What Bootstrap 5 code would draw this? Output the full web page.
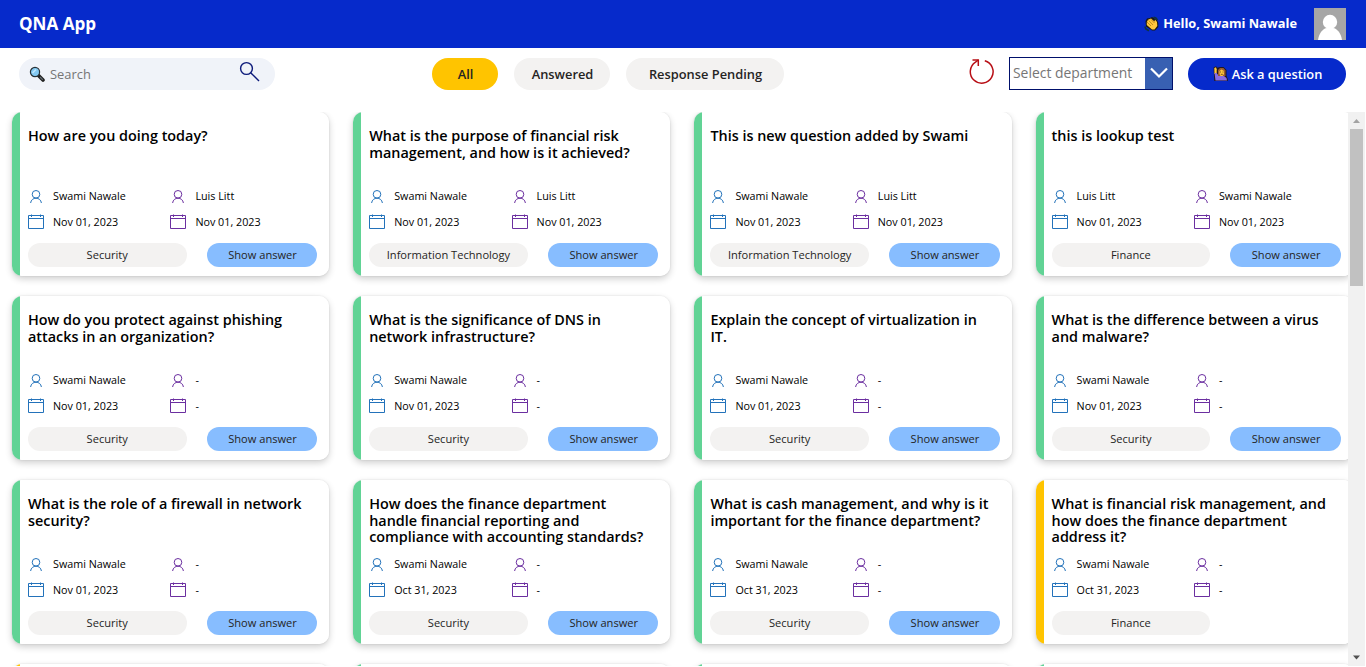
<!DOCTYPE html>
<html lang="en">
<head>
<meta charset="utf-8">
<meta name="viewport" content="width=device-width, initial-scale=1">
<title>QNA App</title>
<link href="https://cdn.jsdelivr.net/npm/bootstrap@5.3.0/dist/css/bootstrap.min.css" rel="stylesheet">
<style>
  body { font-family: "Open Sans", sans-serif; color: #000; background: #fff; height: 667px; overflow: hidden; }
  .topbar { height: 48px; background: #062acb; padding: 0 20px 0 19px; }
  .brand { font-size: 17.1px; font-weight: 700; line-height: 24px; }
  .hello { font-size: 12.8px; font-weight: 700; }
  .toolbar { height: 64px; padding: 9px 20px 0 19px; }
  .search-pill { width: 256px; height: 32px; margin-top: 1px; background: #f0f3f9; font-size: 12.9px; color: #757575; padding: 0 15px 0 10px; }
  .filters { margin: 1px 0 0 157px; }
  .pill { height: 32px; border: 0; border-radius: 16px; background: #f3f2f1; color: #252423; font-size: 12.85px; font-weight: 600; padding: 0 0 0 1px; line-height: 32px; text-align: center; }
  .pill.active { background: #ffc400; }
  .dept { width: 164px; height: 33px; border: 1px solid #00106b; font-size: 13.9px; color: #767676; margin-left: 14px; }
  .dept-caret { width: 27px; background: #3860b2; padding-bottom: 1px; }
  .ask { width: 158px; height: 32px; margin: 1px 0 0 15px; background: #062acb; color: #fff; font-size: 12.85px; font-weight: 600; padding-left: 1px; }
  .gallery { height: 554px; }
  .viewport { width: 1348px; padding-left: 12px; overflow: hidden; }
  .cards { display: grid; grid-template-columns: repeat(4, 317.3px); column-gap: 23.9px; row-gap: 20px; }
  .qcard { height: 164px; border-radius: 10px; background: linear-gradient(to right, #61d395 8px, #fff 8px); padding: 16.1px 12px 0 16px; box-shadow: 0 3px 7px rgba(0,0,0,.19), 0 0 2px rgba(0,0,0,.12); }
  .qcard.pending { background: linear-gradient(to right, #ffc400 8px, #fff 8px); }
  .qtitle { font-size: 14.4px; font-weight: 600; line-height: 16.6px; height: 54.9px; margin: 0; width: 290px; }
  .facts { display: grid; grid-template-columns: 142.4px 140px; grid-auto-rows: 26px; font-size: 10.75px; align-items: center; }
  .facts > div { display: flex; align-items: center; }
  .facts span { padding-left: 9px; white-space: nowrap; }
  .facts svg { width: 16px; height: 16px; flex: none; fill: none; stroke: #2372ba; }
  .facts .to svg { stroke: #6b2fa0; }
  .acts { margin-top: 8px; font-size: 11.1px; font-weight: 500; line-height: 24px; color: #252423; text-align: center; }
  .tag { width: 158.5px; background: #f3f2f1; }
  .show { width: 110.5px; background: #87bdff; margin-left: 20.3px; padding-left: 1px; }
  .sbar { width: 17px; background: #f1f1f1; }
  .thumb { width: 13px; height: 157px; background: #c1c1c1; }
</style>
</head>
<body>
<svg class="d-none">
  <symbol id="person" viewBox="0 0 16 16"><circle cx="8" cy="6.3" r="3.8"/><path d="M2.6 15C3 11.800 5.400 10.200 8 10.200S13 11.800 13.400 15"/></symbol>
  <symbol id="cal" viewBox="0 0 16 16"><path d="M.5 1.500h15v13H.5zM.5 4.500h15M3.500 .5v2.500M12.500 .5v2.500"/></symbol>
</svg>

<header class="topbar d-flex align-items-center text-white">
  <div class="brand">QNA App</div>
  <div class="hello ms-auto d-flex align-items-center">
    <svg width="15" height="16" viewBox="0 0 15 16" style="margin-right:4px"><path d="M1.500 5L3 2.500l3-.5 2-1 5 3 1.300 3v4L11 14.500H8L2 10.500z" fill="#1d1a12"/><path d="M2.800 6L4 3.800l3-1.300 3.500 3 .5-2 2 2.500.3 4-2.800 3.500H8L2.800 9z" fill="#ffc83d"/><path d="M3 6l4 4M4.700 4.500L9 9M7 3.500L10.500 7" stroke="#b57a16" stroke-width=".8"/><path d="M9.500 1.300l2.300.7 1.700 2M.9 10.500l1 2.500 3 1.700" fill="none" stroke="#10343f" stroke-width="1.700"/></svg>
    <span>Hello, Swami Nawale</span>
  </div>
  <svg width="32" height="32" viewBox="0 0 32 32" style="margin-left:17px"><path fill="#a6a6a6" d="M0 0h32v32H0z"/><circle cx="16" cy="14" r="7.200" fill="#fff"/><path d="M4 32c1-7 5-11.500 9-12h6c4 .5 8 5 9 12z" fill="#fff"/></svg>
</header>

<div class="toolbar d-flex align-items-start">
  <div class="search-pill rounded-pill d-flex align-items-center">
    <svg width="17" height="16" viewBox="0 0 17 16"><path d="M9 9l5 5" stroke="#222" stroke-width="3.600" stroke-linecap="round"/><path d="M11 11l2.800 2.800" stroke="#667078" stroke-width="1.200"/><circle cx="6" cy="6" r="4.600" fill="#83c9f2" stroke="#273238" stroke-width="1.200"/><path d="M3.500 7L7 3.500" stroke="#c1e8ff" stroke-width="1.500"/></svg>
    <span style="padding:1px 0 0 4px">Search</span>
    <svg class="ms-auto mb-1" width="21" height="22" viewBox="0 0 21 22" fill="none" stroke="#0c1a7a" stroke-width="1.400"><circle cx="7.500" cy="7.500" r="5.900"/><path d="M11.700 11.700l8.300 8.300"/></svg>
  </div>
  <div class="filters d-flex">
    <button class="pill active" style="width:66px">All</button>
    <button class="pill" style="width:96px;margin-left:16px">Answered</button>
    <button class="pill" style="width:158px;margin-left:16px">Response Pending</button>
  </div>
  <svg class="ms-auto" width="26" height="28" viewBox="0 0 26 28" fill="none" stroke="#b80f16" stroke-width="1.500"><path d="M15.800 3.800A11.400 11.400 0 1 1 6.500 5.200L9.300 3"/><path d="M3.500 3h5.800v6"/></svg>
  <div class="dept d-flex"><span class="flex-grow-1" style="padding-left:3px;line-height:30px">Select department</span>
    <div class="dept-caret d-flex align-items-center justify-content-center"><svg width="18" height="12" viewBox="0 0 18 12"><path d="M1 1.500l8 8 8-8" fill="none" stroke="#fff" stroke-width="2.200"/></svg></div>
  </div>
  <div class="ask rounded-pill d-flex align-items-center justify-content-center">
    <svg width="15" height="16" viewBox="0 0 15 16" style="margin-right:4px"><path d="M.5 1.500L3 .3l1.500 1.500L7 1h3.500l3 3v6l1.300 3v2H1.300z" fill="#21191f"/><path d="M1.300 2l1.700-.7.7 2V8H1.500z" fill="#ffc83d"/><path d="M1.500 7h2l2.500 3h5l2.500 2 .5 2.500H2.500z" fill="#886ce4"/><path d="M5 4l2-2h3.500l2 2.500V10H5z" fill="#9a5a30"/><path d="M6.500 5L8.500 3.500 11 5v3L9.500 10h-2l-1-2z" fill="#ffc83d"/><path d="M7.500 5.500v1M10 5.500v1M7.800 8.300h2" stroke="#5b3516" stroke-width=".8"/></svg><span style="padding-top:1px">Ask a question</span>
  </div>
</div>

<main class="gallery d-flex">
  <div class="viewport"><div class="cards" id="cards"></div></div>
  <div class="sbar d-flex flex-column align-items-center">
    <svg width="17" height="17" viewBox="0 0 17 17" class="flex-shrink-0"><path d="M5 11l3.500-4 3.500 4z" fill="#a3a3a3"/></svg>
    <div class="thumb"></div>
    <svg width="17" height="17" viewBox="0 0 17 17" class="mt-auto"><path d="M5 6.500l3.500 4 3.500-4z" fill="#505050"/></svg>
  </div>
</main>

<script src="https://cdn.jsdelivr.net/npm/bootstrap@5.3.0/dist/js/bootstrap.bundle.min.js"></script>
<script>
  const S = 'Swami Nawale', L = 'Luis Litt', N = 'Nov 01, 2023', O = 'Oct 31, 2023';
  // title, asked by, asked on, answered by, answered on, department, pending
  const questions = [
    ['How are you doing today?', S, N, L, N, 'Security'],
    ['What is the purpose of financial risk<br>management, and how is it achieved?', S, N, L, N, 'Information Technology'],
    ['This is new question added by Swami', S, N, L, N, 'Information Technology'],
    ['this is lookup test', L, N, S, N, 'Finance'],
    ['How do you protect against phishing<br>attacks in an organization?', S, N, '-', '-', 'Security'],
    ['What is the significance of DNS in<br>network infrastructure?', S, N, '-', '-', 'Security'],
    ['Explain the concept of virtualization in<br>IT.', S, N, '-', '-', 'Security'],
    ['What is the difference between a virus<br>and malware?', S, N, '-', '-', 'Security'],
    ['What is the role of a firewall in network<br>security?', S, N, '-', '-', 'Security'],
    ['How does the finance department<br>handle financial reporting and<br>compliance with accounting standards?', S, O, '-', '-', 'Security'],
    ['What is cash management, and why is it<br>important for the finance department?', S, O, '-', '-', 'Security'],
    ['What is financial risk management, and<br>how does the finance department<br>address it?', S, O, '-', '-', 'Finance', true]
  ];
  const fact = (icon, text, cls) => `<div class="${cls}"><svg><use href="#${icon}"/></svg><span>${text}</span></div>`;
  document.getElementById('cards').innerHTML = questions.map(([t, by, on, aby, aon, dept, pending]) => `
    <article class="qcard ${pending ? 'pending' : ''}">
      <h2 class="qtitle">${t}</h2>
      <div class="facts">${fact('person', by, 'from')}${fact('person', aby, 'to')}${fact('cal', on, 'from')}${fact('cal', aon, 'to')}</div>
      <div class="acts d-flex"><div class="tag rounded-pill">${dept}</div>${pending ? '' : '<div class="show rounded-pill">Show answer</div>'}</div>
    </article>`).join('') + '<article class="qcard pending"></article>' + '<article class="qcard"></article>'.repeat(3);
</script>
</body>
</html>
